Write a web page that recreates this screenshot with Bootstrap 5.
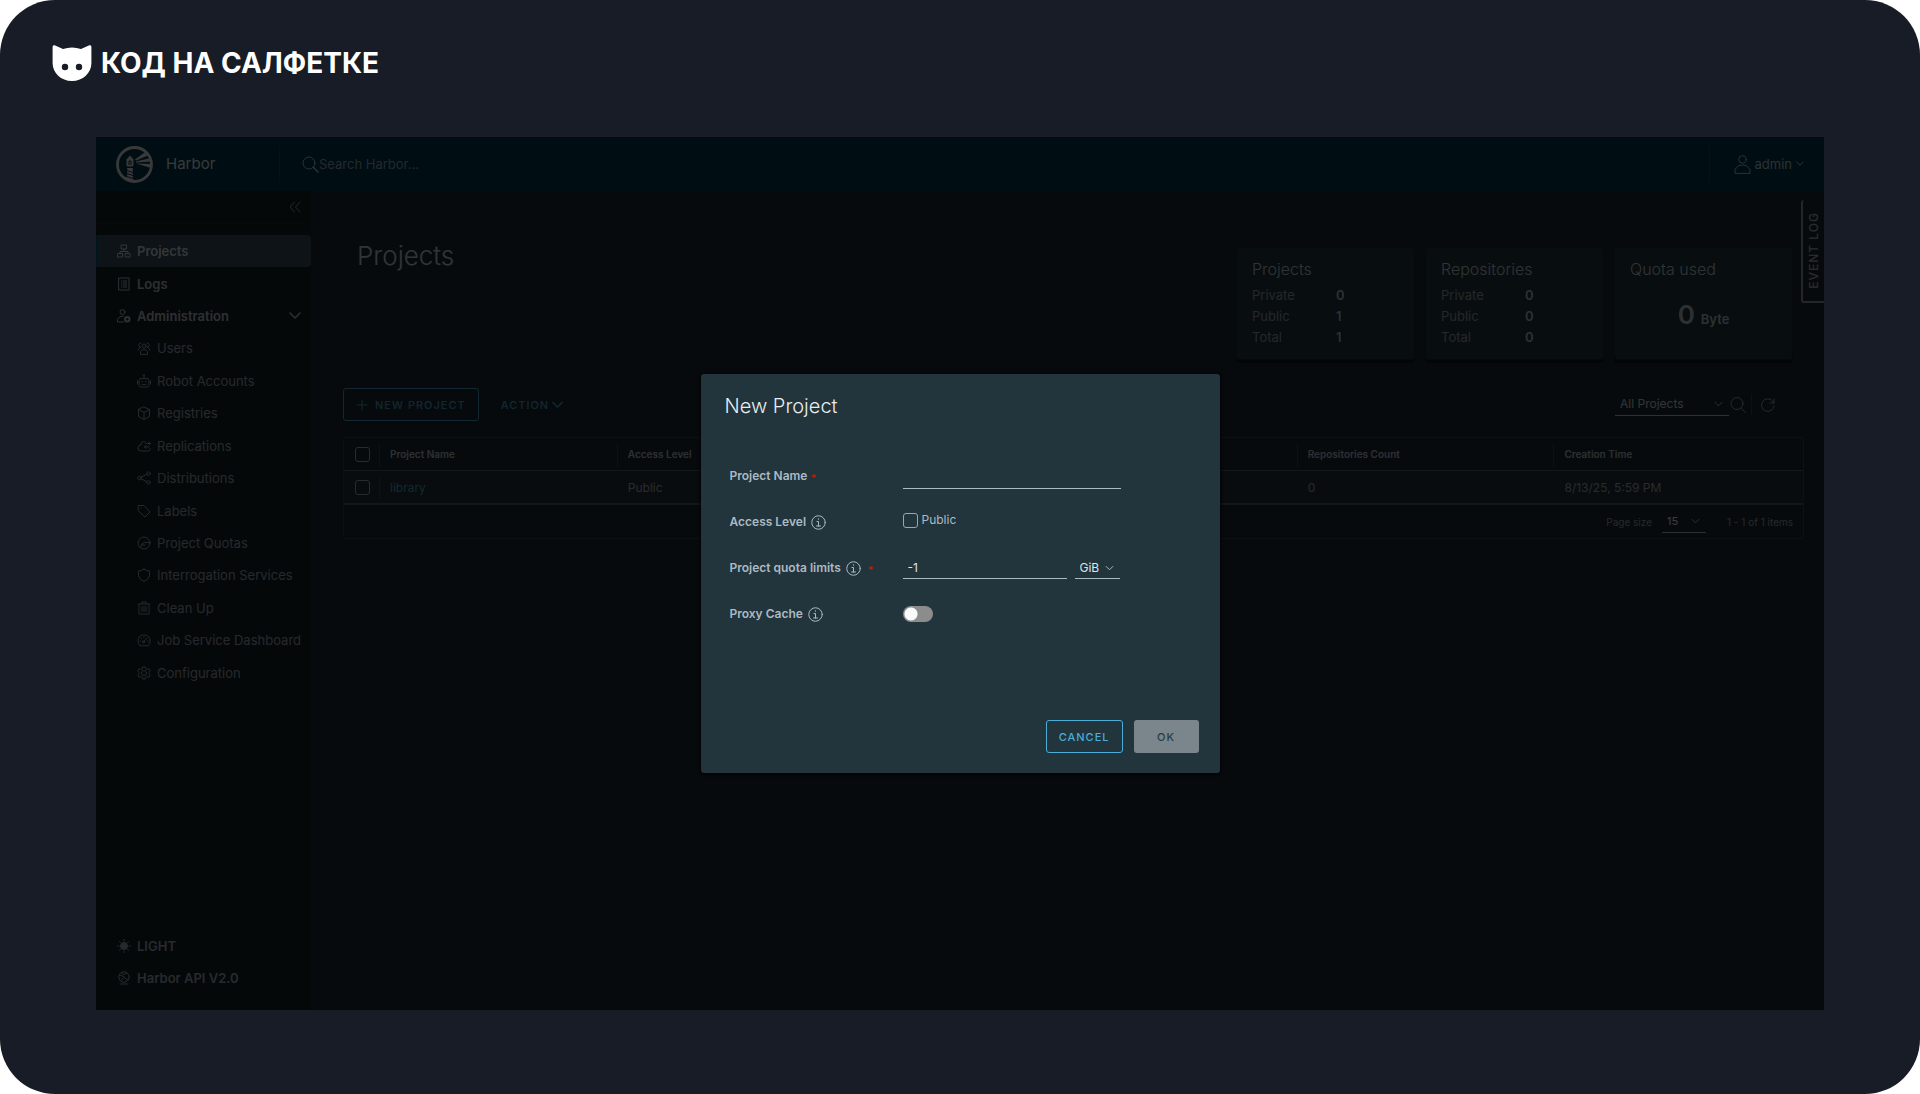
<!DOCTYPE html>
<html lang="en">
<head>
<meta charset="utf-8">
<meta name="viewport" content="width=device-width, initial-scale=1">
<title>Harbor</title>
<link href="https://cdn.jsdelivr.net/npm/bootstrap@5.3.0/dist/css/bootstrap.min.css" rel="stylesheet">
<style>
  :root { --ink: #acbac3; --ink-strong: #dfe6ea; --line: #2f414a; --line-strong: #4d5f69; --accent: #4aaed9; --panel: #22343c; }
  html, body { background: #fff; }
  body { font-family: Inter, "Noto Sans", sans-serif; font-size: 12px; line-height: 16px; color: var(--ink); }
  svg { display: block; flex: none; }
  .ico { fill: none; stroke: currentColor; stroke-width: 2; stroke-linecap: round; stroke-linejoin: round; }
  .ico .solid { fill: currentColor; }

  .frame { min-height: 100vh; background: #181c26; border-radius: 55px; }
  .brandline { height: 137px; padding: 45px 52px 0; gap: 9px; color: #fff; }
  .brandline .title { font-size: 28px; line-height: 36px; font-weight: 700; }

  .shell { margin: 0 96px 84px; background: #1b2a32; }
  .topbar { height: 54px; background: #00364d; color: var(--ink); padding: 0 20px; --bs-navbar-padding-y: 0; }
  .topbar .product { width: 163px; gap: 13px; font-size: 15px; font-weight: 400; color: #dcdcdc; text-decoration: none; }
  .topbar .rule { width: 1px; height: 36px; background: #17475c; }
  .search { margin-left: 22px; }
  .search input { width: 240px; border: 0; padding: 0; background: none; color: var(--ink); font-size: 13px; line-height: 20px; outline: 0; }
  .search input::placeholder { color: #8a9da6; opacity: 1; }
  .user { color: #adbac1; font-size: 13px; padding: 0 0 0 24px; border: 0; background: none; gap: 4px; }

  .side { flex: none; width: 215px; background: #131f26; white-space: nowrap; }
  .side .fold { height: 33px; border-bottom: 1px solid #1a272e; padding-right: 10px; }
  .side .fold button { border: 0; background: none; color: #8b9aa3; padding: 0; }
  .side ul { list-style: none; margin: 0; padding: 0; }
  .side .tree { display: grid; grid-auto-rows: 1fr; height: 454px; margin-top: 11px; }
  .side a { display: flex; align-items: center; height: 100%; gap: 6px; padding: 0 10px 0 21px; font-size: 13px; font-weight: 600; color: #b0babf; text-decoration: none; }
  .side .sub a { padding-left: 41px; font-weight: 400; color: #939fa6; }
  .side .current { background: #34495a; color: #c9d3d9; border-radius: 0 4px 4px 0; box-shadow: inset 2px 0 #00567a; }
  .side .foot { margin-top: auto; padding-bottom: 16px; }
  .side .foot li { height: 32px; }
  .side .foot a { color: #95a3ab; }

  .pane { min-width: 0; padding: 56px 20px 0 32px; }
  .pane h1 { font-size: 26px; line-height: 32px; font-weight: 300; color: #bccad2; margin: -7px 0 0 14px; }
  .tiles { gap: 10px; margin-right: 11px; }
  .tile { width: 179px; height: 113px; background: var(--panel); border: 1px solid #15232a; border-radius: 3px; box-shadow: 0 3px 0 #0c1418; padding: 9px 15px; --bs-card-bg: #22343c; color: var(--ink); }
  .tile h2 { font-size: 16px; line-height: 24px; font-weight: 300; color: #b9c6cd; margin: 0 0 4px; }
  .tile dl { display: grid; grid-template-columns: 84px 1fr; margin: 0; font-size: 13px; line-height: 21px; }
  .tile dt { font-weight: 400; color: #8a999f; }
  .tile dd { margin: 0; font-weight: 600; }
  .tile .quota { gap: 6px; font-size: 13px; font-weight: 600; margin-top: 6px; }
  .tile .quota strong { font-size: 26px; line-height: 48px; font-weight: 600; }

  .tools { margin-top: 28px; height: 33px; padding-right: 28px; }
  .caps { font-size: 11px; line-height: 16px; letter-spacing: 1px; font-weight: 500; border-radius: 3px; text-transform: uppercase; height: 33px; padding: 0 12px; display: inline-flex; align-items: center; justify-content: center; gap: 7px; --bs-btn-font-size: 11px; }
  .caps-line { --bs-btn-color: var(--accent); --bs-btn-border-color: var(--accent); color: var(--accent); border: 1px solid var(--accent); }
  .caps-bare { color: var(--accent); border: 0; background: none; gap: 3px; margin-left: 10px; }
  .dim { opacity: .85; }
  .pick { appearance: none; border: 0; border-bottom: 1px solid var(--ink); border-radius: 0; background: url("data:image/svg+xml,%3Csvg xmlns='http://www.w3.org/2000/svg' viewBox='0 0 10 6'%3E%3Cpath d='M1 1l4 4 4-4' fill='none' stroke='%23acbac3' stroke-width='1.1'/%3E%3C/svg%3E") no-repeat right 6px center / 9px 6px; color: var(--ink-strong); font-size: 12px; line-height: 16px; height: 22px; padding: 0 5px; }
  .tools .pick { width: 114px; color: #c0cbd1; }
  .tools .split { width: 1px; height: 21px; background: var(--line); }
  .tools .plain { border: 0; background: none; padding: 0; color: #8d9ca5; }

  .list { margin-top: 16px; border: 1px solid var(--line); border-radius: 3px; }
  .list table { width: 100%; table-layout: fixed; border-collapse: separate; border-spacing: 0; color: #9ba7ae; }
  .list th, .list td { padding: 5px 0 4px; font-size: 12px; line-height: 23px; font-weight: 400; }
  .list th { font-size: 10px; font-weight: 600; border-bottom: 1px solid #475962; color: #adb8be; }
  .list td { background: #1f3037; border-bottom: 2px solid #475962; }
  .list .split { border-left: 1px solid var(--line); padding-left: 10px; height: 23px; }
  .list td .split.none { border-color: transparent; }
  .list a { color: var(--accent); text-decoration: none; }
  .list .pager { height: 33px; padding-right: 10px; font-size: 10px; color: #8f9ca4; }
  .list .pager .pick { width: 44px; font-size: 11px; margin: 0 21px 0 10px; }
  .tick { appearance: none; display: block; width: 15px; height: 15px; margin: 0; border: 1px solid #98a7b0; border-radius: 3px; background: none; }
  .list .tick { margin-left: 11px; }

  .events { top: 63px; right: 0; width: 23px; height: 103px; border: 2px solid #8b9298; border-width: 0 0 2px 2px; border-radius: 3px 0 0 3px; background: #1b2a32; color: #a0abb1; font-size: 12px; font-weight: 500; letter-spacing: 1px; padding: 0; z-index: 1; }
  .events span { writing-mode: vertical-rl; rotate: 180deg; }

  .veil { position: absolute; width: 100%; height: 100%; --bs-backdrop-opacity: .74; }
  .dialog { --bs-modal-width: 519px; --bs-modal-margin: 0px; }
  .dialog .modal-content { min-height: 399px; background: var(--panel); border: 0; border-radius: 3px; color: var(--ink); box-shadow: 0 1px 2px 2px #0008; }
  .dialog .modal-header { border: 0; padding: 20px 24px 16px; }
  .dialog .modal-title { font-size: 20px; line-height: 24px; font-weight: 300; color: #e9edef; }
  .dialog .modal-body { padding: 19px 29px 0; }
  .dialog .modal-footer { border: 0; padding: 20px 21px; gap: 11px; }
  .dialog .modal-footer > * { margin: 0; }
  .line { display: grid; grid-template-columns: 173px 1fr; align-items: center; height: 46px; }
  .line .lab { display: flex; align-items: center; font-weight: 600; gap: 5px; }
  .req { color: #c21d00; }
  .req-sign { width: 4px; height: 4px; }
  .ico + .req-sign { margin-left: 3px; }
  .field { border: 0; border-bottom: 1px solid var(--ink); background: none; color: var(--ink-strong); height: 22px; padding: 0 5px; font-size: 12px; outline: 0; min-width: 0; }
  .field.full { width: 218px; height: 26px; }
  .field.short { width: 164px; }
  .dialog .pick { width: 45px; }
  .flip { appearance: none; display: block; width: 30px; height: 16px; border-radius: 8px; margin: 0; background: radial-gradient(circle at 8px 8px, #fafafa 6px, transparent 7px) #8c8c8c; }
  .caps-off, .caps-off:disabled { width: 65px; background: #7a868b; color: #2b3b42; border: 0; opacity: 1; }
</style>
<script src="https://cdn.jsdelivr.net/npm/bootstrap@5.3.0/dist/js/bootstrap.bundle.min.js"></script>
</head>
<body>
<div class="frame d-flex flex-column">
  <header class="brandline d-flex align-items-start">
    <svg width="40" height="36" viewBox="0 0 40 36"><path fill="#fff" fill-rule="evenodd" d="M.6 2C.6.4 2 0 3.200.5L11 4Q20 1 29 4L36.800.5C38 0 39.400.4 39.400 2V18C39.400 28 31 36 20 36S.6 28 .6 18ZM13 18.800a3.200 3.200 0 1 0 0 6.400a3.200 3.200 0 1 0 0-6.400ZM27 18.800a3.200 3.200 0 1 0 0 6.400a3.200 3.200 0 1 0 0-6.400Z"/></svg>
    <div class="title">КОД НА САЛФЕТКЕ</div>
  </header>

  <div class="shell d-flex flex-column flex-grow-1 position-relative overflow-hidden">
    <nav class="topbar navbar flex-nowrap justify-content-start">
      <a href="#" class="product d-flex align-items-center">
        <svg width="37" height="37" viewBox="0 0 37 37" fill="none" stroke="#dcdcdc"><circle cx="18.500" cy="18.500" r="17" stroke-width="2.800"/><g fill="#dcdcdc" stroke="none"><path d="M10.500 13.500 14 9.500l3.500 4V19l-1 1.500h-5.500l-.5-1.500Z"/><path d="M11.200 22h5.600v9l1 4.500-9-2.500 2.400-3Z"/><path d="M19 13.500 28.500 6.500 32 9.500 20 14.500Z"/><path d="M20 15.600 33 12.500 34 15.500 20 16.400Z"/><path d="M20 17.600 35.500 18 35 22Z"/></g><path d="M11 24.500l6 2M11 27.500l6 2M11 30.500l6 2" stroke="#00364d"/><path d="M13 19v-4h2v4" stroke="#00364d"/></svg>
        Harbor
      </a>
      <span class="rule"></span>
      <label class="search d-flex align-items-center">
        <svg class="ico" width="17" height="17" viewBox="0 0 34 34"><circle cx="14" cy="14" r="12"/><path d="M23 23l9 9" stroke-width="3"/></svg>
        <input type="search" placeholder="Search Harbor..." aria-label="Search Harbor">
      </label>
      <span class="rule ms-auto"></span>
      <button class="user d-flex align-items-center" type="button">
        <svg class="ico" width="17" height="19" viewBox="0 0 34 38"><circle cx="17" cy="9" r="7.500"/><path d="M2 36V30Q6 20 17 20T32 30V36Z"/></svg>
        admin
        <svg class="ico" width="8" height="6" viewBox="0 0 16 12"><path d="M2 2l6 7 6-7"/></svg>
      </button>
    </nav>

    <div class="d-flex flex-grow-1">
      <aside class="side d-flex flex-column">
        <div class="fold d-flex align-items-center justify-content-end">
          <button type="button" aria-label="Collapse menu"><svg class="ico" width="12" height="12" viewBox="0 0 24 24"><path d="M11 2 2 12l9 10M22 2l-9 10 9 10"/></svg></button>
        </div>
        <ul class="tree">
          <li><a class="current" href="#"><svg class="ico" width="14" height="14" viewBox="0 0 28 28"><path d="M9 2h10v8H9ZM2 19h9v7H2ZM17 19h9v7h-9ZM14 10v5M6 19v-4h16v4"/></svg>Projects</a></li>
          <li><a href="#"><svg class="ico" width="14" height="14" viewBox="0 0 28 28"><path d="M4 2h20v24H4ZM9 8h1M13 8h6M9 12h1M13 12h6M9 16h1M13 16h6M9 20h1M13 20h6"/></svg>Logs</a></li>
          <li><a href="#"><svg class="ico" width="14" height="14" viewBox="0 0 28 28"><circle cx="11" cy="6" r="5"/><path d="M13 26H1v-5Q4 14 12 14"/><circle cx="20.500" cy="20.500" r="4.500" stroke-width="4"/></svg>Administration<svg class="ico ms-auto" width="12" height="8" viewBox="0 0 24 16"><path d="M2 2l10 10L22 2" stroke-width="3"/></svg></a></li>
          <li class="sub"><a href="#"><svg class="ico" width="14" height="14" viewBox="0 0 28 28"><circle cx="14" cy="10" r="4"/><path d="M7 26v-5q2-4 7-4t7 4v5ZM8 4a4 4 0 1 0-1 8M20 4a4 4 0 1 1 1 8M2 18q1-4 5-5M26 18q-1-4-5-5"/></svg>Users</a></li>
          <li class="sub"><a href="#"><svg class="ico" width="14" height="14" viewBox="0 0 28 28"><path d="M8 9h12q4 0 4 4v8q0 5-4 5H8q-4 0-4-5v-8q0-4 4-4ZM14 9V3M12 2h3M1 14v6M27 14v6M10 15v1M18 15v1M10 21h8"/></svg>Robot Accounts</a></li>
          <li class="sub"><a href="#"><svg class="ico" width="14" height="14" viewBox="0 0 28 28"><path d="M14 2l11 5v14l-11 6-11-6V7ZM3 7l11 6 11-6M14 13v14"/></svg>Registries</a></li>
          <li class="sub"><a href="#"><svg class="ico" width="14" height="14" viewBox="0 0 28 28"><path d="M17 6Q12 3 8 8v4q-6 0-6 6t6 6h14q4 0 5-5M18 9h9M24 6l3 3-3 3M24 16h-9M18 13l-3 3 3 3"/></svg>Replications</a></li>
          <li class="sub"><a href="#"><svg class="ico" width="14" height="14" viewBox="0 0 28 28"><circle cx="5" cy="14" r="3.500"/><circle cx="23" cy="5" r="3.500"/><circle cx="23" cy="23" r="3.500"/><path d="M8 12.500 20 6.500M8 15.500l12 6"/></svg>Distributions</a></li>
          <li class="sub"><a href="#"><svg class="ico" width="14" height="14" viewBox="0 0 28 28"><path d="M3 3h11l12 13-10 10L3 14ZM8 8v.5"/></svg>Labels</a></li>
          <li class="sub"><a href="#"><svg class="ico" width="14" height="14" viewBox="0 0 28 28"><circle cx="14" cy="14" r="12"/><path d="M7 22q2-8 8-9h11M10 18h6"/></svg>Project Quotas</a></li>
          <li class="sub"><a href="#"><svg class="ico" width="14" height="14" viewBox="0 0 28 28"><path d="M14 2q5 4 11 4v9q0 7-11 12Q3 22 3 15V6q6 0 11-4Z"/></svg>Interrogation Services</a></li>
          <li class="sub"><a href="#"><svg class="ico" width="14" height="14" viewBox="0 0 28 28"><path d="M2 6h24M10 6V2h8v4M4 8v18h20V8M10 11v10M14 11v10M18 11v10"/></svg>Clean Up</a></li>
          <li class="sub"><a href="#"><svg class="ico" width="14" height="14" viewBox="0 0 28 28"><path d="M5 25Q2 22 2 16 2 4 14 4t12 12q0 6-3 9ZM13 18l7-8M6 16h1M21 16h1M14 8v1M8 10l1 1"/><circle cx="13" cy="18" r="2"/></svg>Job Service Dashboard</a></li>
          <li class="sub"><a href="#"><svg class="ico" width="14" height="14" viewBox="0 0 28 28"><circle cx="14" cy="14" r="5"/><path d="M11.500 2h5l1 3.500 3 1.500 3.500-1.500 2.500 4-2.500 3v3l2.500 3-2.500 4-3.500-1.500-3 1.500-1 3.500h-5l-1-3.500-3-1.500L4 22.500l-2.500-4 2.500-3v-3l-2.500-3 2.500-4L7.500 7l3-1.500Z"/></svg>Configuration</a></li>
        </ul>
        <ul class="foot">
          <li><a href="#"><svg class="ico" width="14" height="14" viewBox="0 0 28 28"><circle class="solid" cx="14" cy="14" r="7"/><path d="M14 1v3M14 24v3M1 14h3M24 14h3M5 5l2 2M21 21l2 2M23 5l-2 2M7 21l-2 2"/></svg>LIGHT</a></li>
          <li><a href="#"><svg class="ico" width="14" height="14" viewBox="0 0 28 28"><circle cx="14" cy="12" r="10.500"/><path d="M6 26h16M5 8l9 3 2 4 7 3M9 4l5 3 6-3M8 19l4-5"/></svg>Harbor API V2.0</a></li>
        </ul>
      </aside>

      <main class="pane flex-grow-1">
        <div class="d-flex justify-content-between">
          <h1>Projects</h1>
          <div class="tiles d-flex">
            <section class="card tile"><h2>Projects</h2><dl><dt>Private</dt><dd>0</dd><dt>Public</dt><dd>1</dd><dt>Total</dt><dd>1</dd></dl></section>
            <section class="card tile"><h2>Repositories</h2><dl><dt>Private</dt><dd>0</dd><dt>Public</dt><dd>0</dd><dt>Total</dt><dd>0</dd></dl></section>
            <section class="card tile"><h2>Quota used</h2><div class="quota d-flex justify-content-center align-items-baseline"><strong>0</strong>Byte</div></section>
          </div>
        </div>

        <div class="tools d-flex align-items-center">
          <button class="btn caps caps-line dim" type="button"><svg class="ico" width="12" height="12" viewBox="0 0 24 24"><path d="M12 2v20M2 12h20"/></svg>New Project</button>
          <button class="btn caps caps-bare dim" type="button">Action<svg class="ico" width="11" height="8" viewBox="0 0 22 16"><path d="M2 3l9 9 9-9" stroke-width="3"/></svg></button>
          <select class="pick ms-auto" aria-label="Project filter"><option>All Projects</option></select>
          <button class="plain" type="button" aria-label="Search"><svg class="ico" width="18" height="18" viewBox="0 0 36 36"><circle cx="16" cy="15" r="12"/><path d="M25 25l8 8"/></svg></button>
          <span class="split mx-1"></span>
          <button class="plain ms-1" type="button" aria-label="Refresh"><svg class="ico" width="16" height="16" viewBox="0 0 32 32"><path d="M28 18A12.500 12.500 0 1 1 25 8l3 4M28 4v8h-8"/></svg></button>
        </div>

        <div class="list">
          <table>
            <colgroup><col style="width:35px"><col style="width:16.300%"><col style="width:46.600%"><col style="width:17.600%"><col></colgroup>
            <thead><tr><th><input class="tick" type="checkbox" aria-label="Select all"></th><th><div class="split">Project Name</div></th><th><div class="split">Access Level</div></th><th><div class="split">Repositories Count</div></th><th><div class="split">Creation Time</div></th></tr></thead>
            <tbody><tr><td><input class="tick" type="checkbox" aria-label="Select library"></td><td><div class="split"><a class="dim" href="#">library</a></div></td><td><div class="split none">Public</div></td><td><div class="split none">0</div></td><td><div class="split none">8/13/25, 5:59 PM</div></td></tr></tbody>
          </table>
          <div class="pager d-flex align-items-center justify-content-end">
            <label for="size">Page size</label>
            <select class="pick" id="size"><option>15</option></select>
            <span>1 - 1 of 1 items</span>
          </div>
        </div>
      </main>
    </div>
    <button class="events position-absolute d-flex align-items-center justify-content-center" type="button"><span>EVENT LOG</span></button>

    <div class="modal-backdrop show veil"></div>
    <div class="modal show d-block position-absolute dialog" role="dialog" aria-labelledby="dlg-title">
      <div class="modal-dialog modal-dialog-centered">
        <form class="modal-content">
          <div class="modal-header"><h2 class="modal-title" id="dlg-title">New Project</h2></div>
          <div class="modal-body">
            <div class="line">
              <label class="lab" for="p-name">Project Name <svg class="req req-sign" viewBox="0 0 4 4"><path d="M2 0v4M0 1l4 2M4 1L0 3" stroke="currentColor"/></svg></label>
              <input class="field full" id="p-name" type="text">
            </div>
            <div class="line">
              <label class="lab" for="p-pub">Access Level <svg class="ico" width="15" height="15" viewBox="0 0 30 30"><circle cx="15" cy="15" r="13.500"/><path d="M12 13h3v9M11 22h8M15 7.500v1"/></svg></label>
              <div class="d-flex align-items-center gap-1 pb-1"><input class="tick" id="p-pub" type="checkbox"><label for="p-pub">Public</label></div>
            </div>
            <div class="line">
              <label class="lab" for="p-quota">Project quota limits <svg class="ico" width="15" height="15" viewBox="0 0 30 30"><circle cx="15" cy="15" r="13.500"/><path d="M12 13h3v9M11 22h8M15 7.500v1"/></svg><svg class="req req-sign" viewBox="0 0 4 4"><path d="M2 0v4M0 1l4 2M4 1L0 3" stroke="currentColor"/></svg></label>
              <div class="d-flex align-items-center"><input class="field short" id="p-quota" type="text" value="-1"><select class="pick ms-2" aria-label="Quota unit"><option>GiB</option></select></div>
            </div>
            <div class="line">
              <label class="lab" for="p-proxy">Proxy Cache <svg class="ico" width="15" height="15" viewBox="0 0 30 30"><circle cx="15" cy="15" r="13.500"/><path d="M12 13h3v9M11 22h8M15 7.500v1"/></svg></label>
              <input class="flip" id="p-proxy" type="checkbox" role="switch">
            </div>
          </div>
          <div class="modal-footer">
            <button class="btn caps caps-line" type="button">Cancel</button>
            <button class="btn caps caps-off" type="submit" disabled>OK</button>
          </div>
        </form>
      </div>
    </div>
  </div>
</div>
</body>
</html>
